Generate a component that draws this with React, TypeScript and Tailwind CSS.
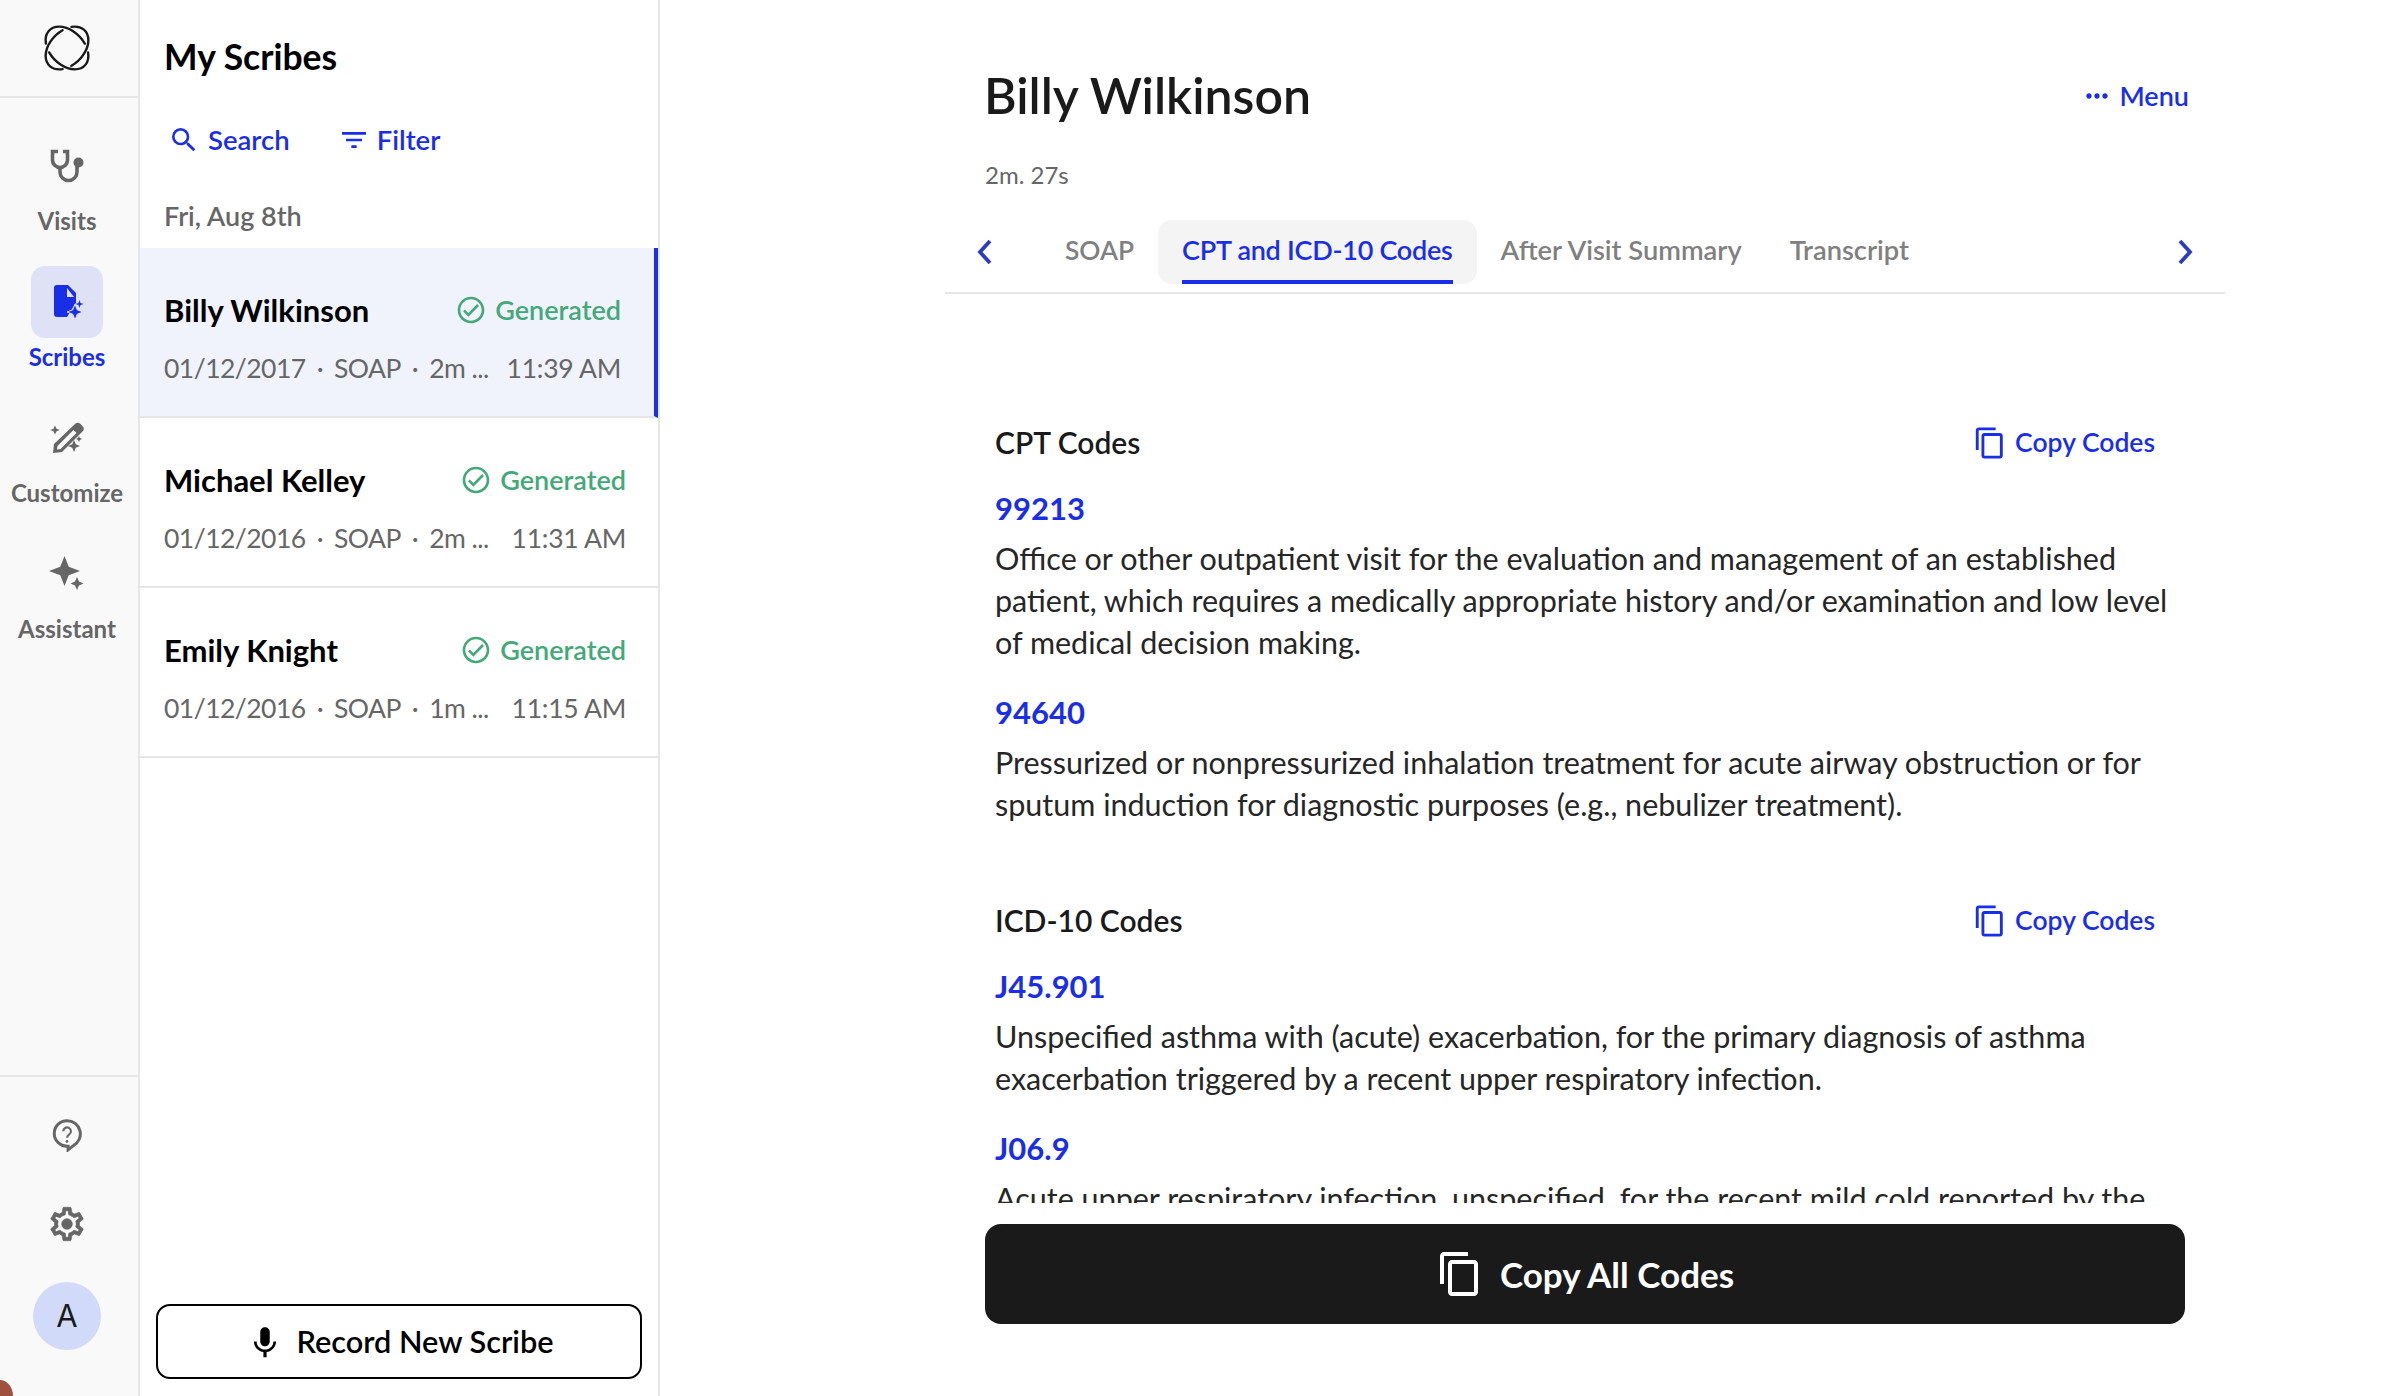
import { ReactNode } from 'react'
import { MdOutlineContentCopy, MdOutlineSearch, MdFilterList, MdMic, MdMoreHoriz, MdOutlineCheckCircle } from 'react-icons/md'

const scribes = [
    { name: 'Billy Wilkinson', date: '01/12/2017', length: '2m ...', time: '11:39 AM', active: true },
    { name: 'Michael Kelley', date: '01/12/2016', length: '2m ...', time: '11:31 AM', active: false },
    { name: 'Emily Knight', date: '01/12/2016', length: '1m ...', time: '11:15 AM', active: false },
]

function Logo() {
    return (
        <svg viewBox="0 0 48 48" className="h-[48px] w-[48px]" fill="none" stroke="#1a1a1a" strokeWidth="2.4" strokeLinecap="round">
            <path d="M2.920 19.520A25 17 45 0 1 41.830 19.590" />
            <path d="M45.080 28.480A25 17 45 0 1 6.170 28.410" />
            <path d="M28.480 2.920A25 17 135 0 1 28.410 41.830" />
            <path d="M19.520 45.080A25 17 135 0 1 19.590 6.170" />
        </svg>
    )
}

function Stethoscope() {
    return (
        <svg viewBox="0 0 36 36" className="h-[36px] w-[36px]" fill="none" stroke="#666" strokeWidth="3.6">
            <path d="M9 3.500H3.500V12a7.500 7.500 0 0 0 15 0V3.500H14" />
            <path d="M11 19.500v4.500a8.500 8.500 0 0 0 17 0v-9" />
            <circle cx="29.500" cy="14.500" r="5" fill="#666" stroke="none" />
        </svg>
    )
}

function ScribeIcon() {
    return (
        <svg viewBox="0 0 50 50" className="h-[50px] w-[50px]" fill="#1a2ee8">
            <path d="M15 8h11l8 8v9.500L25 40H15a3 3 0 0 1-3-3V11a3 3 0 0 1 3-3z" />
            <path d="M25 11l7 9h-7z" fill="#dfe2f6" />
            <path d="M33 27l2.200 5.800L41 35l-5.800 2.200L33 43l-2.200-5.800L25 35l5.800-2.200z" stroke="#dfe2f6" strokeWidth="1" />
            <path d="M37.500 23l1 3 3 1-3 1-1 3-1-3-3-1 3-1z" />
        </svg>
    )
}

function CustomizeIcon() {
    return (
        <svg viewBox="0 0 50 50" className="h-[50px] w-[50px]" fill="#666">
            <path d="M33 11a4 4 0 0 1 5.500 0l2 2a4 4 0 0 1 0 5.500L20 39l-9 1 1-9zM31.500 17 15.500 33l-.5 3.500 3.500-.5 16-16z" fillRule="evenodd" />
            <path d="M13 12.500l1.500 3.200 3.200 1.300-3.200 1.300L13 21.500l-1.500-3.200-3.200-1.300 3.200-1.300z" />
            <path d="M32 27l1.800 4.200L38 33l-4.200 1.800L32 39l-1.800-4.200L26 33l4.200-1.800z" />
            <path d="M37 23l.9 2.100 2.100.9-2.100.9-.9 2.100-.9-2.100-2.100-.9 2.100-.9z" />
        </svg>
    )
}

function AssistantIcon() {
    return (
        <svg viewBox="0 0 36 36" className="h-[36px] w-[36px]" fill="#666">
            <path d="M15.500 2l4.200 10.800L31 17l-11.300 4.200L15.500 32l-4.200-10.800L0 17l11.300-4.200z" />
            <path d="M28 23l2 4.500 4.500 2-4.500 2-2 4.500-2-4.500-4.500-2 4.500-2z" />
        </svg>
    )
}

function HelpIcon() {
    return (
        <svg viewBox="0 0 32 32" className="h-[34px] w-[34px]" fill="none" stroke="#666" strokeWidth="2.800">
            <path d="M16 2.500a12.500 12.500 0 0 1 6 23.500l-5 4v-3.500h-1a12 12 0 0 1 0-24z" />
            <path d="M12.500 12.500a3.600 3.600 0 1 1 5.600 3c-1.400.9-2 1.600-2 3.200" strokeWidth="2" />
            <circle cx="16" cy="22" r="1.300" fill="#666" stroke="none" />
        </svg>
    )
}

function GearIcon() {
    return (
        <svg viewBox="0 0 24 24" className="h-[40px] w-[40px]" fill="#666" stroke="#666" strokeWidth="0.4">
            <path d="M19.430 12.980c.04-.32.07-.64.07-.98 0-.34-.03-.66-.07-.98l2.110-1.650c.19-.15.24-.42.12-.64l-2-3.460c-.09-.16-.26-.25-.44-.25-.06 0-.12.01-.17.03l-2.490 1c-.52-.4-1.080-.73-1.690-.98l-.38-2.650C14.460 2.180 14.250 2 14 2h-4c-.25 0-.46.18-.49.42l-.38 2.650c-.61.25-1.170.59-1.690.98l-2.490-1c-.06-.02-.12-.03-.18-.03-.17 0-.34.09-.43.25l-2 3.460c-.13.22-.07.49.12.64l2.110 1.650c-.04.32-.07.65-.07.98 0 .33.03.66.07.98l-2.110 1.650c-.19.15-.24.42-.12.64l2 3.460c.09.16.26.25.44.25.06 0 .12-.01.17-.03l2.490-1c.52.4 1.080.73 1.690.98l.38 2.650c.03.24.24.42.49.42h4c.25 0 .46-.18.49-.42l.38-2.650c.61-.25 1.170-.59 1.690-.98l2.490 1c.06.02.12.03.18.03.17 0 .34-.09.43-.25l2-3.460c.12-.22.07-.49-.12-.64l-2.110-1.650zm-1.980-1.710c.04.31.05.52.05.73 0 .21-.02.43-.05.73l-.14 1.130.89.7 1.080.84-.7 1.210-1.270-.51-1.040-.42-.9.68c-.43.32-.84.56-1.250.73l-1.060.43-.16 1.130-.2 1.350h-1.400l-.19-1.350-.16-1.130-1.060-.43c-.43-.18-.83-.41-1.230-.71l-.91-.7-1.060.43-1.270.51-.7-1.210 1.080-.84.89-.7-.14-1.130c-.03-.31-.05-.54-.05-.74s.02-.43.05-.73l.14-1.130-.89-.7-1.080-.84.7-1.210 1.270.51 1.040.42.9-.68c.43-.32.84-.56 1.250-.73l1.060-.43.16-1.130.2-1.350h1.390l.19 1.350.16 1.130 1.060.43c.43.18.83.41 1.230.71l.91.7 1.060-.43 1.270-.51.7 1.210-1.070.85-.89.7.14 1.130z" />
            <circle cx="12" cy="12" r="3.200" />
        </svg>
    )
}

function Chevron({ dir }: { dir: 'left' | 'right' }) {
    return (
        <svg viewBox="0 0 20 28" className="h-[28px] w-[20px]" fill="none" stroke="#2b3bc4" strokeWidth="3.800">
            <path d={dir === 'left' ? 'M15 3 5 14l10 11' : 'M5 3l10 11L5 25'} />
        </svg>
    )
}

function NavItem({ icon, label, className }: { icon: ReactNode; label: string; className: string }) {
    return (
        <div className={`flex flex-col items-center pr-[4px] ${className}`}>
            <div className="flex h-[36px] items-center justify-center">{icon}</div>
            <span className="mt-[var(--gap)] text-[24px] font-bold leading-[28px] text-[#666]">{label}</span>
        </div>
    )
}

function ScribeRow({ scribe }: { scribe: (typeof scribes)[number] }) {
    return (
        <div className={`flex h-[170px] flex-col border-b-2 border-[#e6e6e6] pl-[24px] pt-[42px] ${scribe.active ? 'border-r-[4px] border-r-[#1a2ee8] bg-[#f0f3fc] pr-[33px]' : 'pr-[32px]'}`}>
            <div className="flex items-center justify-between">
                <span className="text-[31px] font-bold leading-[40px] text-black">{scribe.name}</span>
                <span className="flex items-center gap-[8px] text-[27px] font-semibold leading-[40px] text-[#44a878]">
                    <MdOutlineCheckCircle className="h-[32px] w-[32px]" />
                    Generated
                </span>
            </div>
            <div className="mt-[18px] flex items-center justify-between text-[26.500px] leading-[40px] text-[#666]">
                <span className="flex items-center tracking-[-0.02em]">
                    {scribe.date}
                    <span className="px-[11px]">·</span>
                    SOAP
                    <span className="px-[11px]">·</span>
                    {scribe.length}
                </span>
                <span className="tracking-[-0.01em]">{scribe.time}</span>
            </div>
        </div>
    )
}

function CodeHeader({ title }: { title: string }) {
    return (
        <div className="flex h-[42px] items-center justify-between">
            <h2 className="text-[30px] font-semibold leading-[42px] text-[#1a1a1a]">{title}</h2>
            <button className="mr-[15px] flex items-center gap-[8px] pt-[2px] text-[26.500px] font-semibold text-[#1a2ee8]">
                <MdOutlineContentCopy className="h-[34px] w-[34px]" />
                Copy Codes
            </button>
        </div>
    )
}

function CodeItem({ code, text, top }: { code: string; text: string; top: string }) {
    return (
        <div className={top}>
            <div className="text-[31px] font-bold leading-[42px] text-[#1a2ee8]">{code}</div>
            <p className="mt-[8px] text-[30.500px] leading-[42px] text-[#262626]">{text}</p>
        </div>
    )
}

export default function App() {
    return (
        <div className="relative flex h-[1396px] w-full overflow-hidden bg-white font-['Lato',sans-serif]">
            <aside className="flex w-[140px] shrink-0 flex-col border-r-2 border-[#e6e6e6] bg-[#f9f9f9]">
                <div className="flex h-[98px] shrink-0 items-center justify-center border-b-2 border-[#e6e6e6] pr-[4px]">
                    <Logo />
                </div>
                <NavItem className="mt-[50px] [--gap:23px]" icon={<Stethoscope />} label="Visits" />
                <div className="mt-[31px] flex flex-col items-center pr-[4px]">
                    <div className="flex h-[72px] w-[72px] items-center justify-center rounded-[14px] bg-[#dfe2f6]">
                        <ScribeIcon />
                    </div>
                    <span className="mt-[5px] text-[24px] font-bold leading-[28px] text-[#1a2ee8]">Scribes</span>
                </div>
                <NavItem className="mt-[49px] [--gap:23px]" icon={<CustomizeIcon />} label="Customize" />
                <NavItem className="mt-[47px] [--gap:25px]" icon={<AssistantIcon />} label="Assistant" />
                <div className="mt-auto flex h-[321px] flex-col items-center border-t-2 border-[#e6e6e6] pr-[4px] pt-[41px]">
                    <HelpIcon />
                    <div className="mt-[52px]"><GearIcon /></div>
                    <div className="mt-[38px] flex h-[68px] w-[68px] items-center justify-center rounded-full bg-[#d2daf9] font-['Inter',sans-serif] text-[31px] text-[#1a1a1a]">A</div>
                </div>
            </aside>

            <section className="flex w-[520px] shrink-0 flex-col border-r-2 border-[#e6e6e6]">
                <div className="px-[24px] pt-[36px]">
                    <h1 className="text-[35.500px] font-bold leading-[42px] text-black">My Scribes</h1>
                    <div className="mt-[42px] flex items-center text-[27.500px] font-semibold leading-[40px] text-[#1a2ee8]">
                        <span className="ml-[4px] flex items-center gap-[8px]">
                            <MdOutlineSearch className="h-[32px] w-[32px]" />
                            Search
                        </span>
                        <span className="ml-[48px] flex items-center gap-[7px]">
                            <MdFilterList className="h-[32px] w-[32px]" />
                            Filter
                        </span>
                    </div>
                    <div className="mt-[36px] text-[27px] font-semibold leading-[40px] text-[#666]">Fri, Aug 8th</div>
                </div>
                <div className="mt-[12px] flex flex-col">
                    {scribes.map((s) => (
                        <ScribeRow key={s.name} scribe={s} />
                    ))}
                </div>
                <div className="mt-auto px-[16px] pb-[17px]">
                    <button className="flex h-[75px] w-[486px] items-center justify-center gap-[12px] rounded-[14px] border-2 border-black pl-[2px] pt-[2px] text-[30.700px] font-semibold text-black">
                        <MdMic className="h-[38px] w-[38px]" />
                        Record New Scribe
                    </button>
                </div>
            </section>

            <main className="flex min-w-0 flex-1 flex-col pl-[285px]">
                <div className="w-[1280px]">
                    <div className="flex items-center justify-between pl-[39px] pr-[36px] pt-[62px]">
                        <h1 className="text-[50px] font-semibold leading-[66px] text-[#1a1a1a]">Billy Wilkinson</h1>
                        <button className="flex items-center gap-[6px] pt-[2px] text-[27px] font-semibold text-[#1a2ee8]">
                            <MdMoreHoriz className="h-[32px] w-[32px]" />
                            Menu
                        </button>
                    </div>
                    <div className="mt-[32px] pl-[40px] text-[24px] leading-[30px] text-[#666]">2m. 27s</div>
                    <div className="mt-[30px] flex h-[74px] items-start border-b-2 border-[#e6e6e6] pl-[30px] pr-[30px]">
                        <div className="mt-[18px]"><Chevron dir="left" /></div>
                        <div className="ml-[70px] flex h-[61px] items-center text-[26.300px] font-semibold text-[#808080]">SOAP</div>
                        <div className="ml-[24px] flex h-[64px] flex-col items-center rounded-[14px] bg-[#f4f4f4] px-[24px]">
                            <span className="flex flex-1 items-center text-[27px] font-semibold tracking-[-0.01em] text-[#1a2ee8]">CPT and ICD-10 Codes</span>
                            <span className="h-[4px] w-full bg-[#1a2ee8]" />
                        </div>
                        <div className="ml-[24px] flex h-[61px] items-center text-[27.300px] font-semibold text-[#808080]">After Visit Summary</div>
                        <div className="ml-[48px] flex h-[61px] items-center text-[27.300px] font-semibold text-[#808080]">Transcript</div>
                        <div className="ml-auto mt-[18px]"><Chevron dir="right" /></div>
                    </div>
                    <div className="h-[909px] overflow-hidden pl-[50px] pr-[55px] pt-[127px]">
                        <CodeHeader title="CPT Codes" />
                        <CodeItem top="mt-[24px]" code="99213" text="Office or other outpatient visit for the evaluation and management of an established patient, which requires a medically appropriate history and/or examination and low level of medical decision making." />
                        <CodeItem top="mt-[28px]" code="94640" text="Pressurized or nonpressurized inhalation treatment for acute airway obstruction or for sputum induction for diagnostic purposes (e.g., nebulizer treatment)." />
                        <div className="mt-[74px]"><CodeHeader title="ICD-10 Codes" /></div>
                        <CodeItem top="mt-[24px]" code="J45.901" text="Unspecified asthma with (acute) exacerbation, for the primary diagnosis of asthma exacerbation triggered by a recent upper respiratory infection." />
                        <CodeItem top="mt-[28px]" code="J06.9" text="Acute upper respiratory infection, unspecified, for the recent mild cold reported by the patient." />
                    </div>
                    <div className="mt-[21px] pl-[40px]">
                        <button className="flex h-[100px] w-[1200px] items-center justify-center gap-[16px] rounded-[16px] bg-[#1a1a1a] text-[35px] font-bold text-white">
                            <MdOutlineContentCopy className="h-[48px] w-[48px]" />
                            Copy All Codes
                        </button>
                    </div>
                </div>
            </main>

            <div className="absolute bottom-0 left-0 h-[16px] w-[13px] rounded-tr-[100%] bg-[#a0503f]" />
        </div>
    )
}
